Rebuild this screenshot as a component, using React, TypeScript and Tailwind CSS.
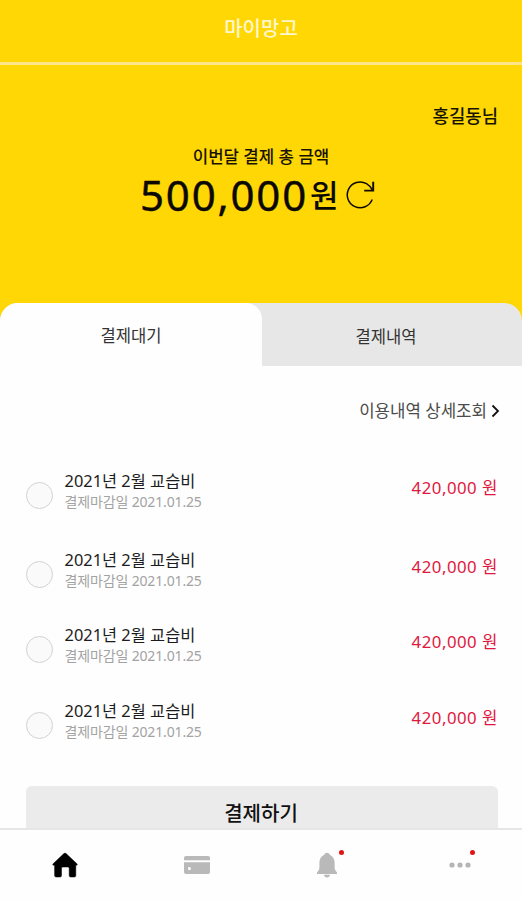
import clsx from "clsx";

interface Payment {
  id: number;
  title: string;
  due: string;
  amount: string;
  height: string;
}

const payments: Payment[] = [
  { id: 1, title: "2021년 2월 교습비", due: "2021.01.25", amount: "420,000", height: "h-[79px]" },
  { id: 2, title: "2021년 2월 교습비", due: "2021.01.25", amount: "420,000", height: "h-[75px]" },
  { id: 3, title: "2021년 2월 교습비", due: "2021.01.25", amount: "420,000", height: "h-[76px]" },
  { id: 4, title: "2021년 2월 교습비", due: "2021.01.25", amount: "420,000", height: "h-[76px]" },
];

function RefreshIcon() {
  return (
    <svg width="30" height="30" viewBox="0 0 30 30" fill="none" stroke="#0c0a00">
      <path d="M26.2 19.5A12.9 12.9 0 1 1 20.5 3.6Q23.6 5.3 26.4 10" strokeWidth="1.5" />
      <path d="M27.2 1.8V10.6H18.2" strokeWidth="1.9" />
    </svg>
  );
}

function HomeIcon() {
  return (
    <svg width="26" height="26" viewBox="0 0 26 26" fill="#000">
      <path
        d="M11.9 1.6Q13 .6 14.1 1.6L25.1 11.9Q25.6 13.2 24.4 13.3H23.8V23.6Q23.8 25 22.4 25H18.6Q17.2 25 17.2 23.6V16.4Q17.2 15 15.8 15H10.9Q9.5 15 9.5 16.4V23.6Q9.5 25 8.1 25H4Q2.6 25 2.6 23.6V13.3H1.6Q.4 13.2 .9 11.9Z"
        stroke="#000"
        strokeWidth=".5"
        strokeLinejoin="round"
      />
    </svg>
  );
}

function CardIcon() {
  return (
    <svg width="28" height="20" viewBox="0 0 28 20" fill="#b9b9b9">
      <path d="M3 1H25Q27 1 27 3V5.2H1V3Q1 1 3 1Z" />
      <path d="M1 7.2H27V17Q27 19 25 19H3Q1 19 1 17Z" />
      <rect x="5.2" y="12.2" width="2.4" height="2.8" fill="#fff" />
    </svg>
  );
}

function BellIcon() {
  return (
    <svg width="22" height="26" viewBox="0 0 22 26" fill="#b9b9b9">
      <path d="M11 .8C12.3 .8 13.3 1.7 14 2.9C17 4.4 18.6 7 18.6 10.5V16Q18.6 18.5 21 20.4V22H1V20.4Q3.4 18.5 3.4 16V10.5C3.4 7 5 4.4 8 2.9C8.7 1.7 9.7 .8 11 .8Z" />
      <path d="M8 22.8H14Q13.6 25.5 11 25.5T8 22.8Z" />
    </svg>
  );
}

function MoreIcon() {
  return (
    <svg width="22" height="6" viewBox="0 0 22 6" fill="#b5b5b5">
      <circle cx="3" cy="3" r="2.6" />
      <circle cx="11" cy="3" r="2.6" />
      <circle cx="19" cy="3" r="2.6" />
    </svg>
  );
}

function PaymentRow({ payment }: { payment: Payment }) {
  return (
    <li className={clsx("flex items-start justify-between", payment.height)}>
      <div className="flex">
        <span className="mt-3 h-[27px] w-[27px] rounded-full border-[1.5px] border-[#d2d2d2] bg-[#fafafa]" />
        <div className="ml-[11.5px] whitespace-nowrap">
          <p className="text-[16.4px] leading-[22px] text-[#1c1c1c]">{payment.title}</p>
          <p className="text-[14px] leading-[20px] tracking-[-0.15px] text-[#a3a3a3]">결제마감일 {payment.due}</p>
        </div>
      </div>
      <span className="mt-[7px] text-[16.8px] leading-[22px] tracking-[0.5px] text-[#e0183f]">
        {payment.amount} 원
      </span>
    </li>
  );
}

export default function App() {
  return (
    <div className="flex h-[900px] w-[522px] flex-col overflow-hidden bg-[#fefefe] font-['Noto_Sans','Noto_Sans_CJK_KR',sans-serif]">
      <div className="h-[303px] shrink-0 bg-[#ffd705]">
        <header className="flex h-[65px] items-center justify-center border-b-[3px] border-[#ffe48a] pb-[4px]">
          <h1 className="text-[20px] leading-7 font-medium text-[#fff6cc]">마이망고</h1>
        </header>
        <p className="mt-[38px] pr-6 text-right text-[17.8px] leading-[26px] font-medium text-[#171300]">홍길동님</p>
        <p className="mt-[16px] text-center text-[16.8px] leading-[24px] font-medium text-[#171300]">
          이번달 결제 총 금액
        </p>
        <div className="mt-px flex h-[50px] items-center pl-[140px] text-[#0c0a00]">
          <span className="text-[42px] leading-[50px] tracking-[1.8px] [-webkit-text-stroke:0.4px_#0c0a00]">
            500,000
          </span>
          <span className="ml-[2px] text-[31px] leading-[50px] font-medium">원</span>
          <span className="ml-[7px]">
            <RefreshIcon />
          </span>
        </div>
      </div>

      {/* the yellow shows through behind the rounded tab corners */}
      <div className="h-[63px] shrink-0 bg-[#ffd705]">
        <div className="flex h-full overflow-hidden rounded-t-[18px] bg-[#e7e7e7] text-[16.6px] text-[#333]">
          <button type="button" className="w-[262px] rounded-tr-[16px] bg-[#fefefe] pt-[3px]">
            결제대기
          </button>
          <button type="button" className="flex-1 pt-[5px] pr-3">
            결제내역
          </button>
        </div>
      </div>

      <main className="flex min-h-0 flex-1 flex-col overflow-hidden pr-6 pl-[26px]">
        <a className="mt-[33px] -mr-[2px] flex items-center justify-end gap-1 text-[16.8px] leading-6 text-[#4b4b4b]">
          이용내역 상세조회
          <svg width="9" height="14" viewBox="0 0 9 14" fill="none" stroke="#111" strokeWidth="1.8">
            <path d="M1.5 1.5 7 7 1.5 12.5" />
          </svg>
        </a>
        <ul className="mt-[47px] shrink-0">
          {payments.map((payment) => (
            <PaymentRow key={payment.id} payment={payment} />
          ))}
        </ul>
        <button
          type="button"
          className="mt-[10px] h-[56px] shrink-0 rounded-[6px] bg-[#ebebeb] pr-[2px] text-[20px] font-medium text-[#111]"
        >
          결제하기
        </button>
      </main>

      <nav className="flex h-[72px] shrink-0 items-center border-t-2 border-[#e6e6e6] bg-[#fefefe]">
        <span className="flex w-[129px] justify-center">
          <HomeIcon />
        </span>
        <span className="flex w-[136px] justify-center">
          <CardIcon />
        </span>
        <span className="flex w-[124px] justify-center">
          <span className="relative">
            <BellIcon />
            <i className="absolute -top-[2px] -right-[6px] h-[5px] w-[5px] rounded-full bg-[#df1414]" />
          </span>
        </span>
        <span className="flex flex-1 justify-center pl-2">
          <span className="relative">
            <MoreIcon />
            <i className="absolute -top-[12px] -right-[4px] h-[5px] w-[5px] rounded-full bg-[#df1414]" />
          </span>
        </span>
      </nav>
    </div>
  );
}
